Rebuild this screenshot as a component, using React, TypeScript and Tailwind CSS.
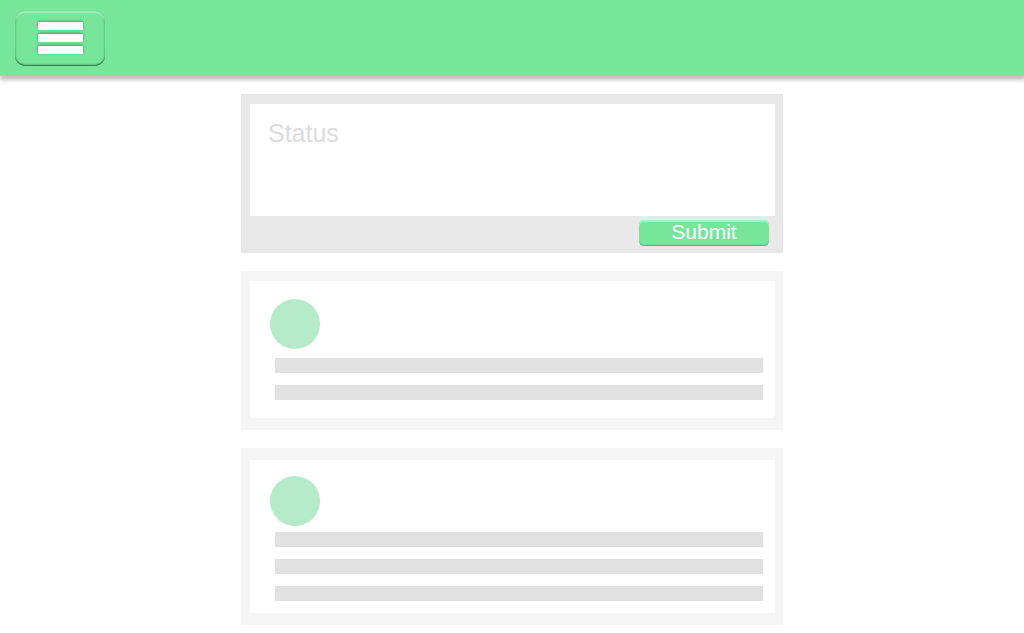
import React from "react";

type PostProps = {
  lines: number;
  frame: string;
  body: string;
  gap: string;
};

function Post({ lines, frame, body, gap }: PostProps) {
  return (
    <article className={`bg-[#f5f5f5] pr-2 pb-3 pl-[9px] ${frame}`}>
      <div className={`flex flex-col bg-white pr-3 pl-5 ${body}`}>
        <div className="size-[50px] rounded-full bg-[#b5ebc8]" />
        <div className={`flex flex-col gap-3 pl-[5px] ${gap}`}>
          {Array.from({ length: lines }, (_, i) => (
            <div key={i} className="h-[15px] bg-[#e1e1e1]" />
          ))}
        </div>
      </div>
    </article>
  );
}

export default function App() {
  return (
    <div className="min-h-screen bg-white font-['Liberation_Sans',Arial,sans-serif]">
      <header className="flex h-[76px] items-center bg-[#77e69b] px-[15px] shadow-[1px_3px_4px_1px_rgba(0,0,0,0.25)]">
        <button
          type="button"
          aria-label="Menu"
          className="flex h-[55px] w-[90px] cursor-pointer flex-col items-center justify-center gap-1 rounded-[10px] bg-[#77e69b] shadow-[inset_0_2px_1px_rgba(255,255,255,0.35),inset_0_-1px_1px_rgba(0,60,20,0.5),inset_0_-1px_3px_rgba(0,70,25,0.4)]"
        >
          <span className="h-2 w-[45px] bg-white shadow-[0_-1px_3px_rgba(0,90,40,0.4)]" />
          <span className="h-2 w-[45px] bg-white shadow-[0_-1px_3px_rgba(0,90,40,0.5)]" />
          <span className="h-2 w-[45px] bg-white shadow-[0_-1px_3px_rgba(0,90,40,0.5)]" />
        </button>
      </header>

      <main className="mx-auto flex w-full max-w-[542px] flex-col gap-[18px] pt-[18px] pb-2">
        <form
          className="flex flex-col bg-[#e9e9e9] pt-[10px] pr-2 pb-[7px] pl-[9px]"
          onSubmit={(event) => event.preventDefault()}
        >
          <textarea
            aria-label="Status"
            placeholder="Status"
            className="block h-28 w-full resize-none bg-white px-[18px] pt-[15px] text-[25px] leading-7 text-gray-700 outline-none placeholder:text-[#dcdcdc]"
          />
          <button
            type="submit"
            className="mt-1 mr-[6px] flex h-[26px] w-[130px] cursor-pointer items-center justify-center self-end rounded-[5px] bg-[#77e69b] pb-[2px] text-[21px] leading-6 text-white shadow-[inset_0_2px_1px_rgba(255,255,255,0.4),inset_0_-1px_1px_rgba(0,90,40,0.35)]"
          >
            Submit
          </button>
        </form>

        <Post lines={2} frame="pt-[10px]" body="pt-[18px] pb-[18px]" gap="pt-[9px]" />
        <Post lines={3} frame="pt-3" body="pt-4 pb-3" gap="pt-[6px]" />
      </main>
    </div>
  );
}
